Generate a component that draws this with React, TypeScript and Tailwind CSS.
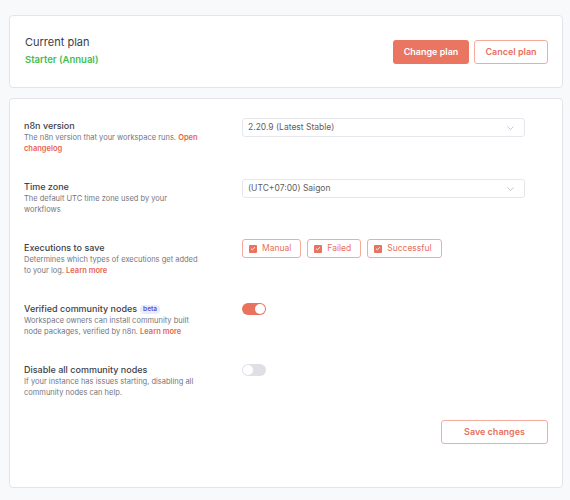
import type { ReactNode } from 'react'

const font = { fontFamily: 'Inter, "Noto Sans", sans-serif' }

function Chevron() {
  return (
    <svg width="7" height="4" viewBox="0 0 7 4" fill="none" className="shrink-0">
      <path d="M0.5 0.5L3.5 3.5L6.5 0.5" stroke="#b9bac2" strokeWidth="0.8" />
    </svg>
  )
}

function Select({ value }: { value: string }) {
  return (
    <div className="flex h-[19px] w-[283px] items-center justify-between rounded-[3px] border border-[#e6e7ec] bg-white pl-[5px] pr-[10px] text-[8.5px] text-[#5e5e66]">
      <span>{value}</span>
      <Chevron />
    </div>
  )
}

function Check({ label }: { label: string }) {
  return (
    <div className="flex h-[19px] items-center gap-[5px] rounded-[3px] border border-[#f4ab9d] bg-white pl-[6px] pr-[9px] text-[8.5px] text-[#e8705c]">
      <span className="flex h-[8px] w-[8px] items-center justify-center rounded-[1px] bg-[#ea735f]">
        <svg width="6" height="5" viewBox="0 0 6 5" fill="none">
          <path d="M1 2.6L2.3 3.8L5 1.2" stroke="white" strokeWidth="0.9" />
        </svg>
      </span>
      {label}
    </div>
  )
}

function Toggle({ on }: { on: boolean }) {
  return (
    <div
      className={
        on
          ? 'flex h-[12px] w-[24px] items-center justify-end rounded-full bg-[#ea735f] px-[1px]'
          : 'flex h-[12px] w-[24px] items-center justify-start rounded-full bg-[#dfe0e6] px-[1px]'
      }
    >
      <span className="h-[10px] w-[10px] rounded-full bg-white" />
    </div>
  )
}

function Row({ label, desc, control, badge, offset }: { label: string; desc: ReactNode; control: ReactNode; badge?: boolean; offset: string }) {
  return (
    <div className="flex h-[61px] items-start">
      <div className="w-[218px] pt-[2px]">
        <div className="flex items-center gap-[3px] text-[9px] font-medium leading-[12px] text-[#3e3e46]">
          {label}
          {badge && (
            <span className="rounded-[4px] bg-[#ecebfd] px-[3px] text-[6.5px] font-semibold leading-[9px] text-[#5a4fd3]">beta</span>
          )}
        </div>
        <p className="w-[180px] text-[7.5px] leading-[11px] text-[#75757e]">{desc}</p>
      </div>
      <div className={offset}>{control}</div>
    </div>
  )
}

const link = 'font-semibold text-[#e8644c]'

export default function App() {
  return (
    <div style={font} className="min-h-[500px] bg-[#f8f9fb] pl-[9px] pr-[7px] pt-[15px]">
      <div className="flex h-[73px] items-center justify-between rounded-[4px] border border-[#e4e5ea] bg-white pl-[15px] pr-[14px]">
        <div className="flex flex-col gap-[3px] pb-[2px]">
          <div className="text-[11px] leading-[15px] text-[#3c3c44]">Current plan</div>
          <div className="text-[9.5px] font-semibold leading-[13px] text-[#3fbe55]">Starter (Annual)</div>
        </div>
        <div className="flex gap-[5px]">
          <button className="h-[24px] w-[76px] rounded-[3px] bg-[#ea7561] text-[9px] font-semibold text-white">Change plan</button>
          <button className="h-[24px] w-[74px] rounded-[3px] border border-[#f4ab9d] bg-white text-[9px] font-semibold text-[#e8705c]">Cancel plan</button>
        </div>
      </div>

      <div className="mt-[10px] rounded-[4px] border border-[#e4e5ea] bg-white pb-[43px] pl-[14px] pr-[14px] pt-[19px]">
        <Row
          label="n8n version"
          desc={<>The n8n version that your workspace runs. <span className={link}>Open changelog</span></>}
          control={<Select value="2.20.9 (Latest Stable)" />}
          offset=""
        />
        <Row
          label="Time zone"
          desc="The default UTC time zone used by your workflows"
          control={<Select value="(UTC+07:00) Saigon" />}
          offset=""
        />
        <Row
          label="Executions to save"
          desc={<>Determines which types of executions get added to your log. <span className={link}>Learn more</span></>}
          control={
            <div className="-mt-[1px] flex gap-[6px]">
              <Check label="Manual" />
              <Check label="Failed" />
              <Check label="Successful" />
            </div>
          }
          offset=""
        />
        <Row
          label="Verified community nodes"
          badge
          desc={<>Workspace owners can install community built node packages, verified by n8n. <span className={link}>Learn more</span></>}
          control={<Toggle on />}
          offset="pt-[2px]"
        />
        <Row
          label="Disable all community nodes"
          desc="If your instance has issues starting, disabling all community nodes can help."
          control={<Toggle on={false} />}
          offset="pt-[2px]"
        />
        <div className="-mt-[3px] flex justify-end">
          <button className="h-[24px] w-[107px] rounded-[3px] border border-[#f4ab9d] bg-white text-[9px] font-semibold text-[#e8705c]">Save changes</button>
        </div>
      </div>
    </div>
  )
}
